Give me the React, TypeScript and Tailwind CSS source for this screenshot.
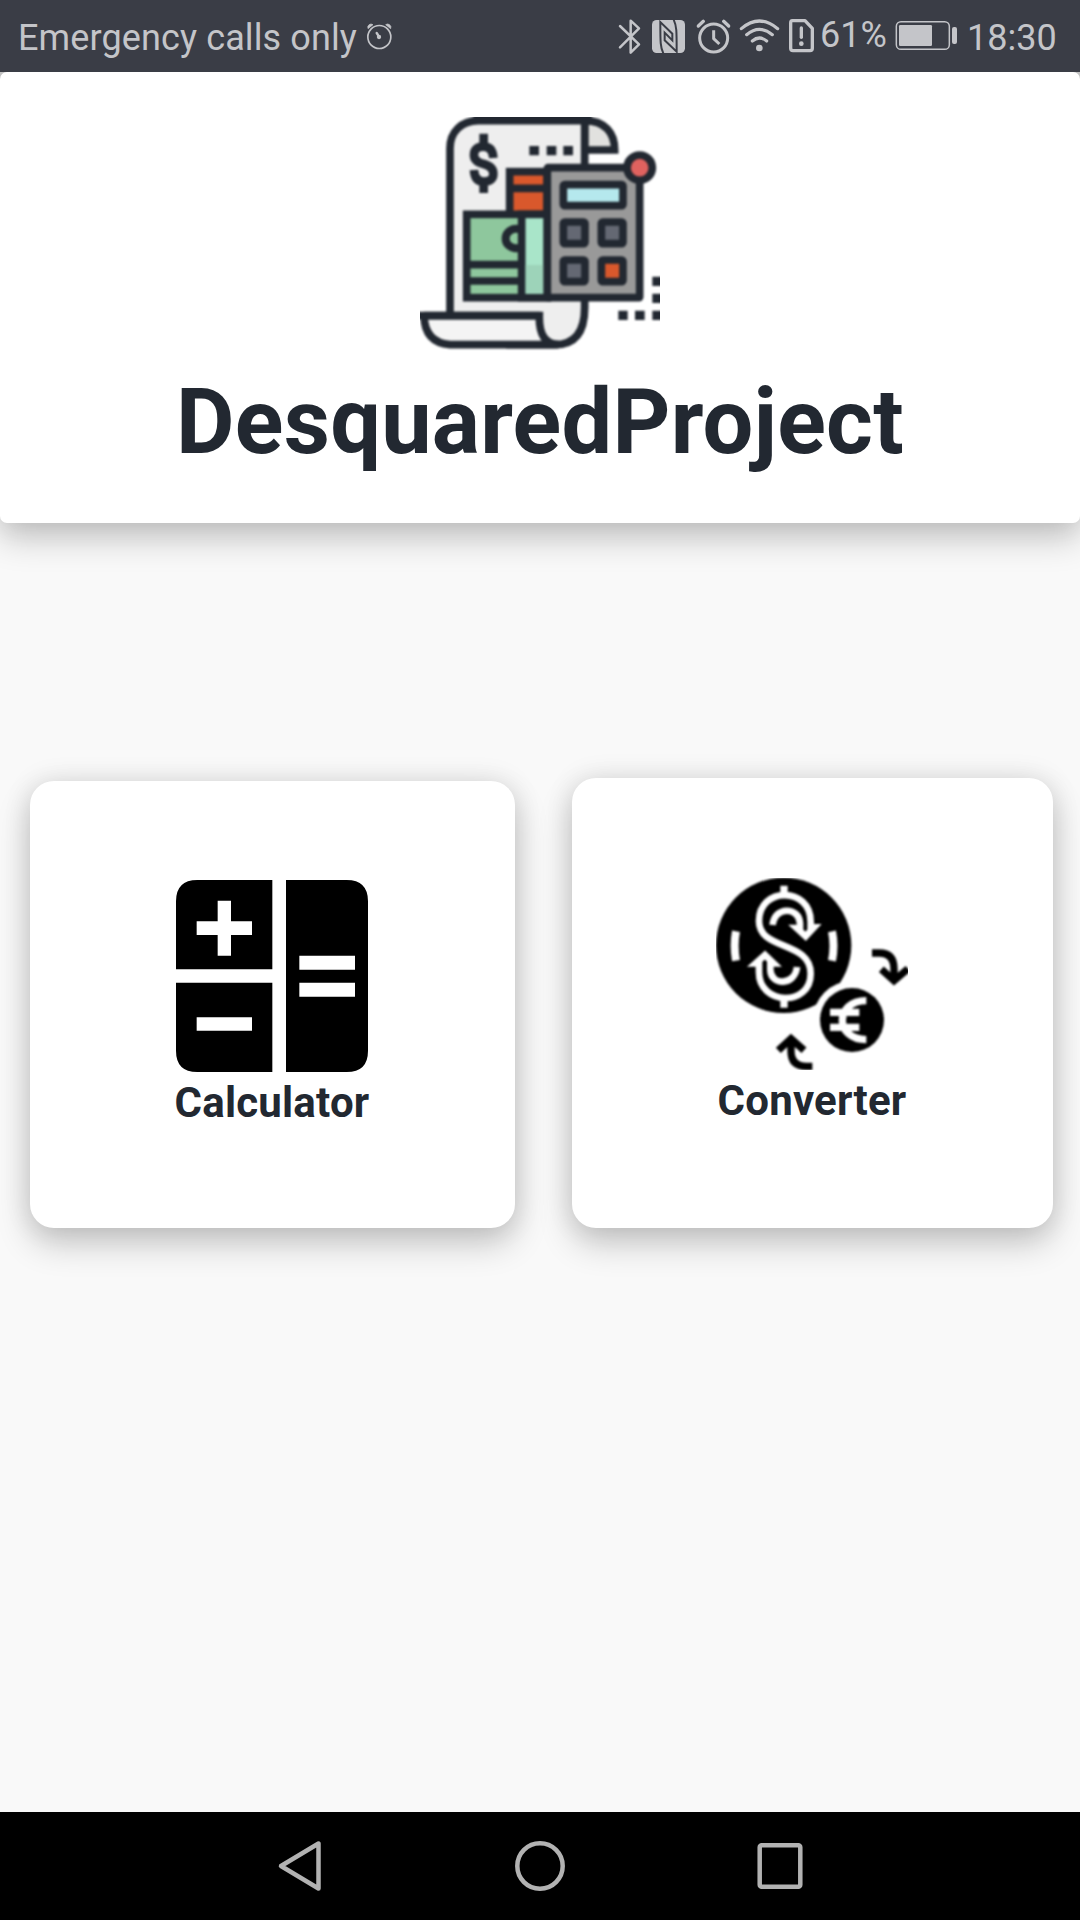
import type { ReactNode } from "react";

const INK = "#222831";
const STATUS = "#c4c5c9";

function StatusIcon({ x, w, className, children }: { x: number; w: number; className: string; children: ReactNode }) {
  return (
    <svg className={`h-[72px] shrink-0 ${className}`} viewBox={`${x} 0 ${w} 216`} fill="none" stroke={STATUS}>
      {children}
    </svg>
  );
}

function StatusBar() {
  return (
    <header className="relative z-10 flex h-[72px] items-start bg-[#3a3d46] text-[36px] leading-[42px] text-[#c4c5c9]">
      <span className="ml-[18px] mt-[17px] w-[346px] whitespace-nowrap tracking-[0.12px]">Emergency calls only</span>
      <StatusIcon x={1092} w={93} className="w-[31px]">
        <circle cx="1138" cy="111" r="34.5" strokeWidth="5" />
        <path d="M1104 86a10 10 0 0 1 15-12zM1172 86a10 10 0 0 0-15-12z" fill={STATUS} strokeWidth="2" />
        <circle cx="1137" cy="111" r="6.5" fill={STATUS} stroke="none" />
        <path d="M1130 99l4 6" strokeWidth="7" strokeLinecap="round" />
      </StatusIcon>
      <StatusIcon x={45} w={90} className="ml-[220px] w-[30px]">
        <path d="M60 78l57 55-25 25V62l25 23-57 57" strokeWidth="7.5" strokeLinejoin="round" strokeLinecap="round" />
      </StatusIcon>
      <StatusIcon x={150} w={111} className="ml-[5px] w-[37px]">
        <rect x="156" y="60" width="99" height="99" rx="14" fill={STATUS} stroke="none" />
        <path
          d="M190 160C181 142 181 128 181 66L217 101V121L194 98V121L230 155C230 92 230 78 221 59"
          stroke="#3a3d46"
          strokeWidth="6"
        />
      </StatusIcon>
      <StatusIcon x={285} w={111} className="ml-[8px] w-[37px]">
        <circle cx="341" cy="114" r="42" strokeWidth="9" />
        <path d="M341 91v25l17 16" strokeWidth="9" strokeLinejoin="round" />
        <path d="M295 78l15-14M386 78l-15-14" strokeWidth="10" strokeLinecap="round" />
      </StatusIcon>
      <StatusIcon x={414} w={126} className="ml-[6px] w-[42px]">
        <path d="M424 86q54-46 109 0M440 104q38-32 77 0M457 123q21-18 43 0" strokeWidth="9.5" strokeLinecap="round" />
        <circle cx="478" cy="144" r="10" fill={STATUS} stroke="none" />
      </StatusIcon>
      <StatusIcon x={558} w={90} className="ml-[6px] w-[30px]">
        <path d="M577 62h38l22 23v60q0 7-7 7h-51q-7 0-7-7V69q0-7 5-7z" strokeWidth="10" strokeLinejoin="round" />
        <path d="M604 84v28" strokeWidth="10" strokeLinecap="round" />
        <circle cx="604" cy="131" r="7" fill={STATUS} stroke="none" />
      </StatusIcon>
      <span className="ml-[4px] mt-[14px] w-[74px] whitespace-nowrap">61%</span>
      <StatusIcon x={882} w={192} className="w-[64px]">
        <rect x="889" y="65" width="159" height="83" rx="14" strokeWidth="4.5" />
        <rect x="897" y="75" width="99" height="63" rx="4" fill={STATUS} stroke="none" />
        <rect x="1056" y="81" width="15" height="51" rx="6" fill={STATUS} stroke="none" />
      </StatusIcon>
      <span className="ml-[9px] mt-[17px] whitespace-nowrap">18:30</span>
    </header>
  );
}

function ProjectLogo() {
  return (
    <svg className="size-[240px]" viewBox="30 36 720 720" fill="none">
      <defs>
        <filter id="logo-soft" x="-5%" y="-5%" width="110%" height="110%" colorInterpolationFilters="sRGB">
          <feGaussianBlur stdDeviation="3.4" />
        </filter>
      </defs>
      <g filter="url(#logo-soft)" stroke={INK} strokeWidth="23">
        <path d="M524 47C585 47 614 84 614 135H524z" fill="#e1e1df" />
        <path d="M120 640V130C120 80 155 47 205 47H524v561q0 111-90 111H300V640z" fill="#eee" />
        <path d="M190 38H545" />
        <path d="M42 632H388q-2 86 58 87H120q-76-6-78-87" fill="#f4f4f4" />
        <path d="M20 632H390" />
        <rect x="299" y="200" width="112" height="130" fill="#d9582c" />
        <path d="M299 250h110" />
        <rect x="170" y="328" width="242" height="250" fill="#8ec79d" />
        <rect x="335" y="328" width="77" height="250" fill="#a9e5c9" />
        <path d="M347 480h53v86h-53z" fill="#9dd3b9" stroke="none" />
        <path d="M170 479h165M170 528h165" />
        <path d="M335 374c-60-18-68 66 0 55" strokeWidth="24" />
        <rect x="412" y="188" width="277" height="390" rx="2" fill="#999" />
        <rect x="460" y="239" width="179" height="63" rx="4" fill="#b5e8ed" />
        <rect x="460" y="351" width="65" height="65" rx="4" fill="#646873" />
        <rect x="574" y="351" width="65" height="65" rx="4" fill="#646873" />
        <rect x="460" y="465" width="65" height="65" rx="4" fill="#646873" />
        <rect x="574" y="465" width="65" height="65" rx="4" fill="#d9582c" />
        <circle cx="689" cy="188" r="38" fill="#e0625f" />
        <g stroke="none" fill={INK}>
          <path d="M358 123h29v28h-29zM410 123h29v28h-29zM460 123h29v28h-29z" />
          <path d="M625 617h28v28h-28zM675 617h29v28h-29zM727 617h40v28h-40zM727 566h40v28h-40zM727 515h40v28h-40z" />
        </g>
        <path d="M250 159q-2-34-29-34-29 0-29 25 0 20 29 27 29 8 29 29 0 24-29 24-27 0-29-35M221 86v38M221 226v38" strokeWidth="26" />
      </g>
    </svg>
  );
}

function CalculatorIcon() {
  return (
    <svg className="size-[192px]" viewBox="33 45 576 576">
      <defs>
        <filter id="calc-soft" x="-5%" y="-5%" width="110%" height="110%">
          <feGaussianBlur stdDeviation="1.8" />
        </filter>
      </defs>
      <path d="M97 45H322V313H33V109Q33 45 97 45zM33 353H322V621H97Q33 621 33 557zM363 45H545Q609 45 609 109V557Q609 621 545 621H363z" />
      <path
        fill="#fff"
        filter="url(#calc-soft)"
        d="M158 107h40v62h63v41h-63v62h-40v-62H95v-41h63zM95 457h166v40H95zM403 272h167v42H403zM403 353h167v42H403z"
      />
    </svg>
  );
}

function ConverterIcon() {
  return (
    <svg className="size-[192px]" viewBox="48 39 576 576" fill="none">
      <defs>
        <filter id="conv-soft" x="-5%" y="-5%" width="110%" height="110%" colorInterpolationFilters="sRGB">
          <feGaussianBlur stdDeviation="2.8" />
        </filter>
      </defs>
      <g filter="url(#conv-soft)">
        <circle cx="251" cy="241" r="203" fill="#000" />
        <circle cx="456" cy="465" r="117" fill="#fff" />
        <circle cx="456" cy="465" r="96" fill="#000" />
        <g stroke="#fff" strokeWidth="20">
          <path d="M252 62v34M252 394v34" strokeWidth="22" />
          <path d="M218 180c5-58 80-54 82-6v15h-10l27 25 25-27h-10v-17c0-106-155-106-155-2 0 90 155 58 155 158 0 100-155 96-155-4v-27h-10l28-25 26 25h-10v20c2 48 74 48 80-9" />
          <path d="M108 199q-8 43 0 88M396 199q9 43 0 88" strokeWidth="24" />
          <path d="M499 407c-96 0-96 117 0 117M390 442h88M390 487h88" strokeWidth="22" />
        </g>
        <g stroke="#000" strokeWidth="22">
          <path d="M516 264h22q44 0 44 48v30M544 313l38 34 42-36" />
          <path d="M337 604h-18q-46 0-46-46v-28M235 556l38-35 39 35" />
        </g>
      </g>
    </svg>
  );
}

function Card({ label, className, children }: { label: string; className: string; children: ReactNode }) {
  return (
    <button
      className={`flex flex-col items-center rounded-[24px] bg-white shadow-[0_16px_34px_rgba(0,0,0,0.2),0_0_28px_rgba(0,0,0,0.11)] ${className}`}
    >
      {children}
      <span className="h-[57px] pt-[2px] text-[42px] leading-[57px] font-bold tracking-[0.2px] text-[#222831]">{label}</span>
    </button>
  );
}

function NavBar() {
  return (
    <nav className="flex h-[108px] items-center justify-between bg-black px-[270px]">
      {/* back, home and recents */}
      <svg className="size-[60px]" viewBox="0 0 60 60" fill="none" stroke="#b2b2b2" strokeWidth="4.5" strokeLinejoin="round">
        <path d="M11 30 48.500 7.500V52.500z" />
      </svg>
      <svg className="size-[60px]" viewBox="0 0 60 60" fill="none" stroke="#b2b2b2" strokeWidth="4.5">
        <circle cx="30" cy="30" r="22.700" />
      </svg>
      <svg className="size-[60px]" viewBox="0 0 60 60" fill="none" stroke="#b2b2b2" strokeWidth="4.5">
        <rect x="9.700" y="9.300" width="40.600" height="41.400" rx="2" />
      </svg>
    </nav>
  );
}

export default function App() {
  return (
    <div className="flex h-[1920px] w-[1080px] flex-col overflow-hidden bg-[#f9f9f9] font-[Roboto,sans-serif]">
      <StatusBar />
      <main className="flex-1">
        <div className="bg-[linear-gradient(#ccc_50%,transparent_50%)]">
          <section className="flex h-[451px] flex-col items-center rounded-[7px] bg-white pt-[45px] shadow-[0_16px_34px_rgba(0,0,0,0.2),0_0_28px_rgba(0,0,0,0.11)]">
            <ProjectLogo />
            <h1 className="pt-[6px] text-[90px] leading-[119px] font-bold tracking-[0.25px] text-[#222831]">DesquaredProject</h1>
          </section>
        </div>
        <div className="mt-[255px] flex items-end justify-between pl-[30px] pr-[27px]">
          <Card label="Calculator" className="h-[447px] w-[485px] pt-[99px] pr-[1px]">
            <CalculatorIcon />
          </Card>
          <Card label="Converter" className="h-[450px] w-[481px] pt-[100px] pr-[1px]">
            <ConverterIcon />
          </Card>
        </div>
      </main>
      <NavBar />
    </div>
  );
}
